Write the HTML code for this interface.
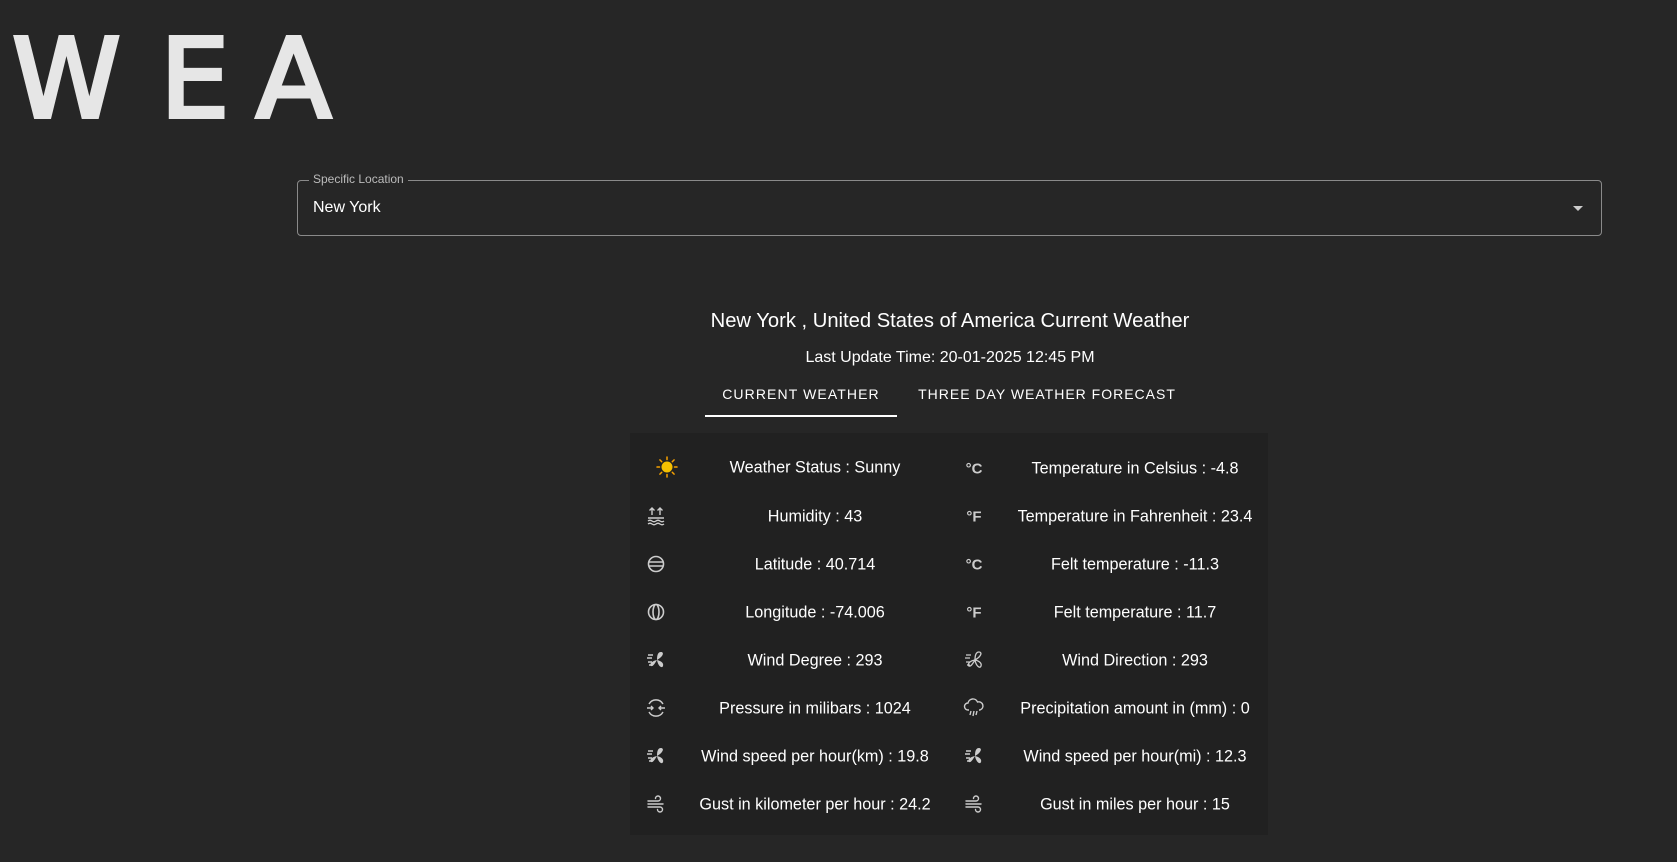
<!DOCTYPE html>
<html><head><meta charset="utf-8"><style>
html,body{margin:0;padding:0;width:1677px;height:862px;background:#262626;overflow:hidden;font-family:"Liberation Sans",sans-serif;color:#fff}
.logo{position:absolute;left:0;top:24px;font-family:"DejaVu Sans",sans-serif;font-size:110px;color:#e6e6e6;line-height:1;font-weight:normal;-webkit-text-stroke:4px #e6e6e6;stroke-linejoin:round}
.logo span{position:absolute;top:0}
.box{position:absolute;left:297px;top:180px;width:1303px;height:54px;border:1px solid #8a8a8a;border-radius:4px}
.lab{position:absolute;left:309px;top:172px;font-size:12px;color:#bbb;background:#262626;padding:0 4px}
.val{position:absolute;left:313px;top:199px;font-size:16px}
.arr{position:absolute;left:1573px;top:206px;width:0;height:0;border-left:5px solid transparent;border-right:5px solid transparent;border-top:5px solid #ccc}
.c{position:absolute;text-align:center;white-space:nowrap}
.card{position:absolute;left:630px;top:433px;width:638px;height:402px;background:#212121}
.r{position:absolute;font-size:16.2px;white-space:nowrap;transform:translate(-50%,-50%)}
.ic{position:absolute;transform:translate(-50%,-50%);color:#ccc;font-size:15px;font-weight:bold}
svg.ic{width:22px;height:22px}
</style></head><body>
<div class="logo"><span style="left:12px">W</span><span style="left:160px">E</span><span style="left:256px">A</span></div>
<div class="box"></div><div class="lab">Specific Location</div><div class="val">New York</div><div class="arr"></div>
<div class="c" style="left:0;width:1900px;top:310px;font-size:20.2px">New York , United States of America Current Weather</div>
<div class="c" style="left:0;width:1900px;top:349px;font-size:16px">Last Update Time: 20-01-2025 12:45 PM</div>
<div class="c" style="left:705px;width:192px;top:386px;font-size:14px;letter-spacing:1.1px">CURRENT WEATHER</div>
<div style="position:absolute;left:705px;top:415px;width:192px;height:2px;background:#fff"></div>
<div class="c" style="left:897px;width:300px;top:386px;font-size:14px;letter-spacing:1px">THREE DAY WEATHER FORECAST</div>
<div class="card"></div>
<svg class="ic" style="left:667px;top:467px" viewBox="0 0 22 22"><circle cx="11" cy="11" r="5.5" fill="#f5c000"/><g stroke="#f5a000" stroke-width="1.5" stroke-linecap="round"><path d="M11 1v2.5M11 18.5V21M1 11h2.5M18.5 11H21M3.9 3.9l1.8 1.8M16.3 16.3l1.8 1.8M3.9 18.1l1.8-1.8M16.3 5.7l1.8-1.8"/></g></svg>
<div class="r" style="left:815px;top:468px">Weather Status : Sunny</div>
<div class="ic" style="left:974px;top:469px">°C</div>
<div class="r" style="left:1135px;top:469px">Temperature in Celsius : -4.8</div>
<svg class="ic" style="left:656px;top:516px" viewBox="0 0 22 22" fill="none" stroke="#ccc" stroke-width="1.4"><path d="M7 10V3M4.5 5.5L7 3l2.5 2.5M15 10V3M12.5 5.5L15 3l2.5 2.5M3 13h16M3 16q2-1.5 4 0t4 0 4 0 4 0M3 19q2-1.5 4 0t4 0 4 0 4 0"/></svg>
<div class="r" style="left:815px;top:517px">Humidity : 43</div>
<div class="ic" style="left:974px;top:517px">°F</div>
<div class="r" style="left:1135px;top:517px">Temperature in Fahrenheit : 23.4</div>
<svg class="ic" style="left:656px;top:564px" viewBox="0 0 22 22" fill="none" stroke="#ccc" stroke-width="1.6"><circle cx="11" cy="11" r="7.5"/><path d="M4 9h14M4 13h14"/></svg>
<div class="r" style="left:815px;top:565px">Latitude : 40.714</div>
<div class="ic" style="left:974px;top:565px">°C</div>
<div class="r" style="left:1135px;top:565px">Felt temperature : -11.3</div>
<svg class="ic" style="left:656px;top:612px" viewBox="0 0 22 22" fill="none" stroke="#ccc" stroke-width="1.6"><circle cx="11" cy="11" r="7.5"/><ellipse cx="11" cy="11" rx="3" ry="7.5"/></svg>
<div class="r" style="left:815px;top:613px">Longitude : -74.006</div>
<div class="ic" style="left:974px;top:613px">°F</div>
<div class="r" style="left:1135px;top:613px">Felt temperature : 11.7</div>
<svg class="ic" style="left:656px;top:660px" viewBox="0 0 22 22" fill="#ccc"><path d="M12 11C12 6 13 3 16 3s3 4-4 8zM12 11c4 1 7 3 6 6s-5 0-6-6zM12 11c-2 3-4 7-6 6s0-5 6-6z"/><path d="M3 6h5M2 9h5M3 13h4M4 16h3" stroke="#ccc" stroke-width="1.4"/></svg>
<div class="r" style="left:815px;top:661px">Wind Degree : 293</div>
<svg class="ic" style="left:974px;top:660px" viewBox="0 0 22 22" fill="none" stroke="#ccc" stroke-width="1.3"><path d="M12 11C12 6 13 3 16 3s3 4-4 8zM12 11c4 1 7 3 6 6s-5 0-6-6zM12 11c-2 3-4 7-6 6s0-5 6-6z"/><path d="M3 6h5M2 9h5M3 13h4M4 16h3"/></svg>
<div class="r" style="left:1135px;top:661px">Wind Direction : 293</div>
<svg class="ic" style="left:656px;top:708px" viewBox="0 0 22 22" fill="none" stroke="#ccc" stroke-width="1.4"><path d="M4 7a8 8 0 0 1 14 0M4 15a8 8 0 0 0 14 0M2 11h6M14 11h6M6 9l2 2-2 2M16 9l-2 2 2 2"/></svg>
<div class="r" style="left:815px;top:709px">Pressure in milibars : 1024</div>
<svg class="ic" style="left:974px;top:708px" viewBox="0 0 22 22" fill="none" stroke="#ccc" stroke-width="1.4"><path d="M6 13H5a3.5 3.5 0 0 1 0-7 5 5 0 0 1 9.5-1 4 4 0 0 1 2.5 8h-1M8 14l-1 4M11 14l-1 5M14 14l-1 4"/></svg>
<div class="r" style="left:1135px;top:709px">Precipitation amount in (mm) : 0</div>
<svg class="ic" style="left:656px;top:756px" viewBox="0 0 22 22" fill="#ccc"><path d="M12 11C12 6 13 3 16 3s3 4-4 8zM12 11c4 1 7 3 6 6s-5 0-6-6zM12 11c-2 3-4 7-6 6s0-5 6-6z"/><path d="M3 6h5M2 9h5M3 13h4M4 16h3" stroke="#ccc" stroke-width="1.4"/></svg>
<div class="r" style="left:815px;top:757px">Wind speed per hour(km) : 19.8</div>
<svg class="ic" style="left:974px;top:756px" viewBox="0 0 22 22" fill="#ccc"><path d="M12 11C12 6 13 3 16 3s3 4-4 8zM12 11c4 1 7 3 6 6s-5 0-6-6zM12 11c-2 3-4 7-6 6s0-5 6-6z"/><path d="M3 6h5M2 9h5M3 13h4M4 16h3" stroke="#ccc" stroke-width="1.4"/></svg>
<div class="r" style="left:1135px;top:757px">Wind speed per hour(mi) : 12.3</div>
<svg class="ic" style="left:656px;top:804px" viewBox="0 0 22 22" fill="none" stroke="#ccc" stroke-width="1.4" stroke-linecap="round"><path d="M3 8h10a2.5 2.5 0 1 0-2.5-2.5M3 11h15M3 14h12a2.5 2.5 0 1 1-2.5 2.5"/></svg>
<div class="r" style="left:815px;top:805px">Gust in kilometer per hour : 24.2</div>
<svg class="ic" style="left:974px;top:804px" viewBox="0 0 22 22" fill="none" stroke="#ccc" stroke-width="1.4" stroke-linecap="round"><path d="M3 8h10a2.5 2.5 0 1 0-2.5-2.5M3 11h15M3 14h12a2.5 2.5 0 1 1-2.5 2.5"/></svg>
<div class="r" style="left:1135px;top:805px">Gust in miles per hour : 15</div>
</body></html>
